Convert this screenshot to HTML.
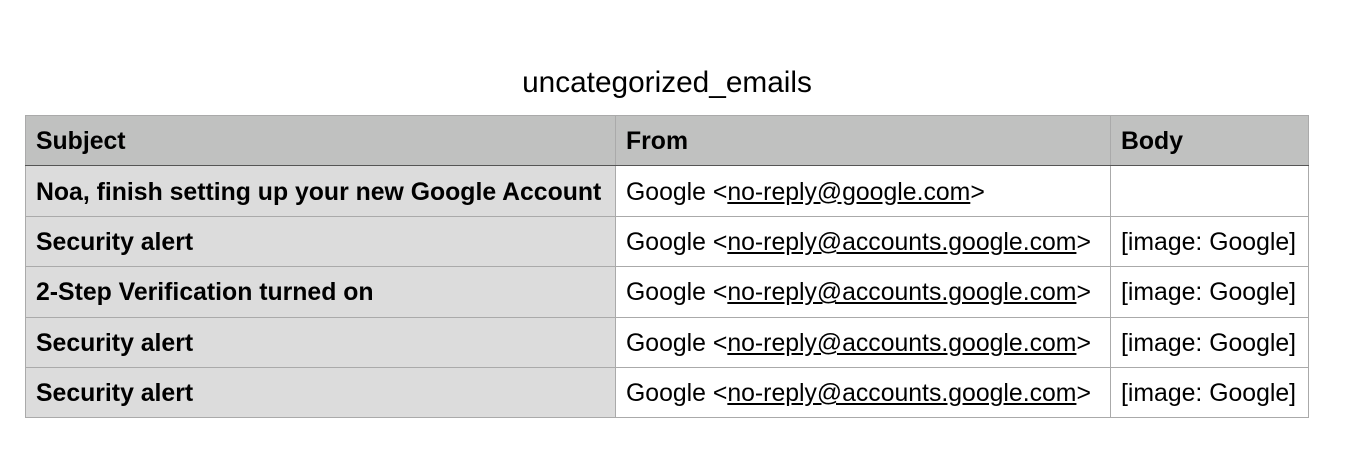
<!DOCTYPE html>
<html><head><style>
body{margin:0;width:1354px;height:466px;background:#fff;font-family:"Liberation Sans",Arial,sans-serif;color:#000;position:relative}
h1{position:absolute;top:65px;left:0;width:1334px;text-align:center;font-weight:normal;font-size:29.8px;margin:0;line-height:36px}
table{position:absolute;left:25px;top:115px;border-collapse:collapse;font-size:24.8px}
td,th{border:1px solid #aaa;height:50.4px;padding:3px 0 0 10px;text-align:left;white-space:nowrap;box-sizing:border-box;line-height:28px}
th{background:#c0c1c0;border-bottom:1px solid #555;font-weight:bold}
td.s{background:#dcdcdc;font-weight:bold}
u{text-decoration:underline}
</style></head><body>
<h1>uncategorized_emails</h1>
<table>
<tr><th style="width:590px">Subject</th><th style="width:495px">From</th><th style="width:198px">Body</th></tr>
<tr><td class="s">Noa, finish setting up your new Google Account</td><td>Google &lt;<u>no-reply@google.com</u>&gt;</td><td></td></tr>
<tr><td class="s">Security alert</td><td>Google &lt;<u>no-reply@accounts.google.com</u>&gt;</td><td>[image: Google]</td></tr>
<tr><td class="s">2-Step Verification turned on</td><td>Google &lt;<u>no-reply@accounts.google.com</u>&gt;</td><td>[image: Google]</td></tr>
<tr><td class="s">Security alert</td><td>Google &lt;<u>no-reply@accounts.google.com</u>&gt;</td><td>[image: Google]</td></tr>
<tr><td class="s">Security alert</td><td>Google &lt;<u>no-reply@accounts.google.com</u>&gt;</td><td>[image: Google]</td></tr>
</table>
</body></html>
